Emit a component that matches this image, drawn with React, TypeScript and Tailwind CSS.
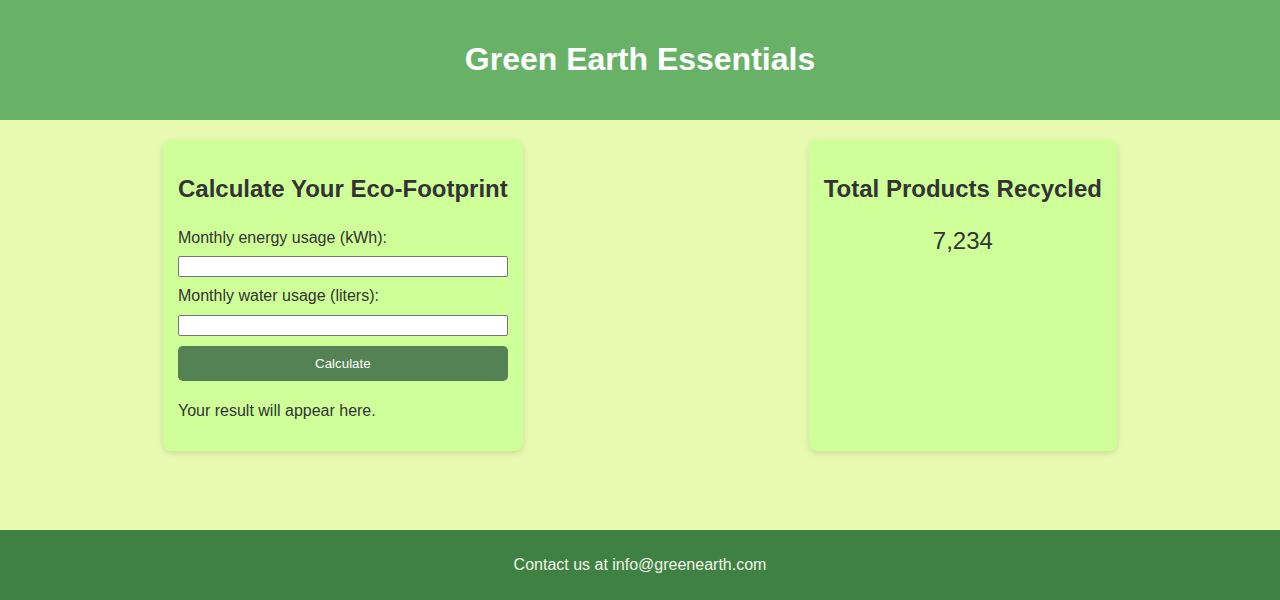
import React from "react";

export default function App() {
  return (
    <div className="min-h-[600px] flex flex-col bg-[#e8f9b0] text-[#333333]" style={{ fontFamily: '"Liberation Sans", Arial, sans-serif' }}>
      <header className="bg-[#67b267] p-5 text-center">
        <h1 className="my-[21.44px] text-[32px] leading-[37px] font-bold text-white">Green Earth Essentials</h1>
      </header>
      <main className="h-[410px] p-5">
        <div className="flex justify-around">
          <section className="bg-[#cfff98] rounded-lg p-[15px] shadow-[0_2px_6px_rgba(0,0,0,0.12)] flex flex-col">
            <h2 className="mt-5 mb-[26px] text-[24px] leading-[28px] font-bold">Calculate Your Eco-Footprint</h2>
            <div className="flex flex-col gap-[10px]">
              <label className="text-[16px] leading-[17px]">Monthly energy usage (kWh):</label>
              <input type="number" className="h-[21px] bg-white border border-[#767676] rounded-[2px]" />
              <label className="text-[16px] leading-[18px]">Monthly water usage (liters):</label>
              <input type="number" className="h-[21px] bg-white border border-[#767676] rounded-[2px]" />
              <button className="h-[35px] pt-[1px] bg-[#548254] text-white text-[13.33px] rounded-[5px]">Calculate</button>
              <p className="mt-[11px] mb-4 text-[16px] leading-[18px]">Your result will appear here.</p>
            </div>
          </section>
          <section className="bg-[#cfff98] rounded-lg p-[15px] shadow-[0_2px_6px_rgba(0,0,0,0.12)] text-center">
            <h2 className="mt-5 mb-6 text-[24px] leading-[28px] font-bold">Total Products Recycled</h2>
            <p className="text-[24px] leading-[28px]">7,234</p>
          </section>
        </div>
      </main>
      <footer className="bg-[#3f8142] py-[10px] text-center">
        <p className="my-4 text-[16px] leading-[18px] text-[#f0f5e8]">Contact us at info@greenearth.com</p>
      </footer>
    </div>
  );
}
